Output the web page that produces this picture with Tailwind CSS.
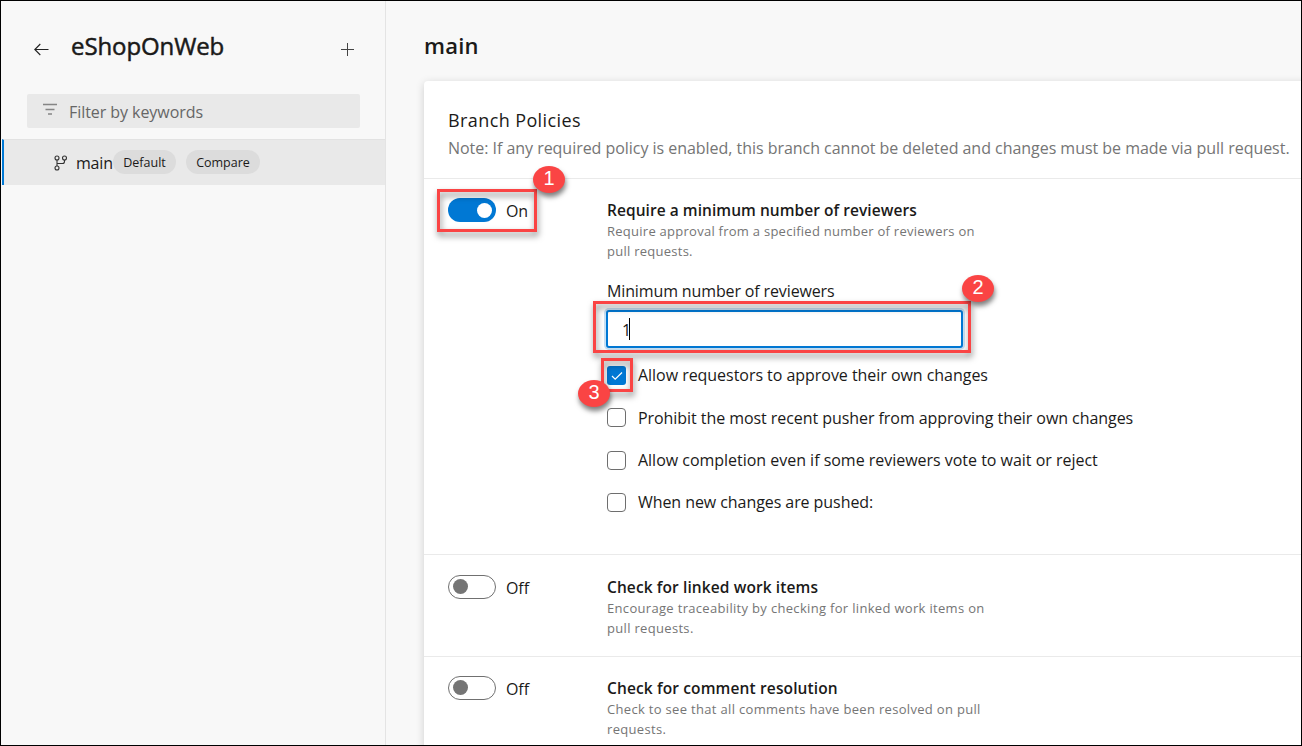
<!DOCTYPE html>
<html lang="en">
<head>
<meta charset="utf-8">
<title>Branch policies - main</title>
<script src="https://cdn.jsdelivr.net/npm/@tailwindcss/browser@4"></script>
</head>
<body class="font-['Open_Sans',sans-serif] text-[16px] text-[#1b1a19]">
<div class="relative flex h-[746px] w-[1302px] overflow-hidden border border-black bg-[#f8f8f8]">
  <aside class="flex w-[385px] shrink-0 flex-col border-r border-[#e4e4e4]">
    <header class="flex h-[93px] items-start pl-8 pr-[30px] pt-[28px]">
      <svg class="mt-[12px] h-4 w-4 shrink-0" viewBox="0 0 16 16" fill="none" stroke="#222" stroke-width="1.1"><path d="M15.500 8.500H1.800M7.300 3L1.800 8.500L7.300 14"/></svg>
      <h1 class="ml-[22px] whitespace-nowrap text-[24px] leading-[34px] tracking-[-0.1px] [-webkit-text-stroke:0.5px_#1b1a19]">eShopOnWeb</h1>
      <svg class="ml-auto mt-[13px] h-[15px] w-[15px] shrink-0" viewBox="0 0 15 15" fill="none" stroke="#444" stroke-width="1"><path d="M7.500 1V14M1 7.500H14"/></svg>
    </header>
    <div class="ml-[26px] flex h-[34px] w-[333px] shrink-0 items-center rounded-[2px] bg-[#e9e9e9] pl-[15px]">
      <svg class="mb-1 h-[14px] w-4" viewBox="0 0 16 14" fill="none" stroke="#858585" stroke-width="1.300"><path d="M1 2.500H15M3.500 7.500H12.500M6 12H10"/></svg>
      <span class="ml-[11px] mt-px whitespace-nowrap tracking-[-0.06px] text-[#666]">Filter by keywords</span>
    </div>
    <div class="ml-px mt-[11px] flex h-[46px] shrink-0 items-center border-l-2 border-t border-l-[#0078d4] border-t-[#e2e2e2] bg-[#e9e9e9] pl-[49px]">
      <svg class="h-4 w-4" viewBox="0 0 16 16" fill="none" stroke="#333" stroke-width="1.1"><circle cx="4" cy="3" r="2"/><circle cx="11.500" cy="3" r="2"/><circle cx="4" cy="13" r="2"/><path d="M4 5V11M11.500 5V6.500Q11.500 8.500 9.500 8.500H4"/></svg>
      <span class="ml-[7px] w-[37px] whitespace-nowrap tracking-[-0.2px]">main</span>
      <span class="mb-px flex h-6 w-[63px] items-center justify-center rounded-full bg-[#dcdcdc] pt-[3px] text-[12.5px]">Default</span>
      <span class="mb-px ml-[10px] flex h-6 w-[74px] items-center justify-center rounded-full bg-[#dcdcdc] pt-[3px] text-[12.5px]">Compare</span>
    </div>
  </aside>

  <main class="flex min-w-0 flex-1 flex-col pl-[38px]">
    <h2 class="h-[80px] shrink-0 pt-[27px] text-[22px] font-semibold leading-[34px] tracking-[0.2px]">main</h2>
    <section class="h-[700px] w-[900px] shrink-0 rounded-[4px] bg-white shadow-[0_2px_8px_rgba(0,0,0,0.17)]">
      <header class="h-[97px] pl-6 pt-[26px]">
        <h3 class="text-[18px] leading-[26px] tracking-[0.4px]">Branch Policies</h3>
        <p class="mt-[3px] whitespace-nowrap leading-6 tracking-[-0.035px] text-[#757575]">Note: If any required policy is enabled, this branch cannot be deleted and changes must be made via pull request.</p>
      </header>

      <div class="flex h-[376px] border-t border-[#eaeaea] pl-6">
        <div class="flex w-[159px] shrink-0 items-start pt-[19px]">
          <span class="flex h-6 w-12 items-center justify-end rounded-full bg-[#0078d4] pr-1"><span class="h-[15px] w-[15px] rounded-full bg-white"></span></span>
          <span class="ml-[10px] mt-px leading-6 tracking-[-0.3px]">On</span>
        </div>
        <div class="pt-5">
          <h4 class="whitespace-nowrap text-[15.5px] font-semibold leading-[22px] tracking-[0.05px]">Require a minimum number of reviewers</h4>
          <p class="whitespace-nowrap text-[13px] leading-5 tracking-[0.26px] text-[#757575]">Require approval from a specified number of reviewers on<br>pull requests.</p>
          <p class="mt-[18px] whitespace-nowrap leading-6 tracking-[-0.13px]">Minimum number of reviewers</p>
          <div class="-ml-px mt-[7px] flex h-[38px] w-[357px] items-center rounded-[3px] border-2 border-[#0078d4] bg-white pl-[14px] shadow-[0_0_0_2px_#c7e0f4]"><span class="mt-[2px]">1</span><span class="-ml-[2px] h-[22px] w-px bg-black"></span></div>
          <ul class="mt-[15px] flex flex-col">
            <li class="flex h-[42px] items-start"><span class="mt-[3px] flex h-[19px] w-[19px] items-center justify-center rounded-[3px] bg-[#0078d4]"><svg class="h-3 w-3" viewBox="0 0 12 12" fill="none" stroke="#fff" stroke-width="1.200"><path d="M1 6L4.200 9.200L11 2.500"/></svg></span><span class="ml-3 whitespace-nowrap leading-6 tracking-[-0.04px]">Allow requestors to approve their own changes</span></li>
            <li class="flex h-[43px] items-start"><span class="mt-[3px] h-[19px] w-[19px] rounded-[4px] border border-[#6e6e6e]"></span><span class="ml-3 mt-px whitespace-nowrap leading-6 tracking-[-0.06px]">Prohibit the most recent pusher from approving their own changes</span></li>
            <li class="flex h-[42px] items-start"><span class="mt-[3px] h-[19px] w-[19px] rounded-[4px] border border-[#6e6e6e]"></span><span class="ml-3 whitespace-nowrap leading-6 tracking-[-0.02px]">Allow completion even if some reviewers vote to wait or reject</span></li>
            <li class="flex h-[42px] items-start"><span class="mt-[3px] h-[19px] w-[19px] rounded-[4px] border border-[#6e6e6e]"></span><span class="ml-3 whitespace-nowrap leading-6 tracking-[-0.07px]">When new changes are pushed:</span></li>
          </ul>
        </div>
      </div>

      <div class="flex h-[102px] border-t border-[#eaeaea] pl-6">
        <div class="flex w-[159px] shrink-0 items-start pt-5">
          <span class="flex h-6 w-12 items-center rounded-full border border-[#707070] pb-px pl-1"><span class="h-[15px] w-[15px] rounded-full bg-[#757575]"></span></span>
          <span class="ml-[10px] mt-px leading-6 tracking-[-0.1px]">Off</span>
        </div>
        <div class="pt-[21px]">
          <h4 class="whitespace-nowrap text-[15.5px] font-semibold leading-[22px] tracking-[0.1px]">Check for linked work items</h4>
          <p class="whitespace-nowrap text-[13px] leading-5 tracking-[0.32px] text-[#757575]">Encourage traceability by checking for linked work items on<br>pull requests.</p>
        </div>
      </div>

      <div class="flex h-[102px] border-t border-[#eaeaea] pl-6">
        <div class="flex w-[159px] shrink-0 items-start pt-[19px]">
          <span class="flex h-6 w-12 items-center rounded-full border border-[#707070] pb-px pl-1"><span class="h-[15px] w-[15px] rounded-full bg-[#757575]"></span></span>
          <span class="ml-[10px] mt-px leading-6 tracking-[-0.1px]">Off</span>
        </div>
        <div class="pt-5">
          <h4 class="whitespace-nowrap text-[15.5px] font-semibold leading-[22px] tracking-[0.13px]">Check for comment resolution</h4>
          <p class="whitespace-nowrap text-[13px] leading-5 tracking-[0.32px] text-[#757575]">Check to see that all comments have been resolved on pull<br>requests.</p>
        </div>
      </div>
    </section>
  </main>

  <!-- Step highlights -->
  <div class="absolute left-[436px] top-[188px] h-[43px] w-[100px] border-3 border-[#fa4444] drop-shadow-[1px_4px_3px_rgba(0,0,0,0.5)]"></div>
  <div class="absolute left-[592px] top-[300px] h-[52px] w-[378px] border-3 border-[#fa4444] drop-shadow-[1px_4px_3px_rgba(0,0,0,0.5)]"></div>
  <div class="absolute left-[600px] top-[357px] h-[34px] w-[32px] border-3 border-[#fa4444] drop-shadow-[1px_4px_3px_rgba(0,0,0,0.5)]"></div>
  <div class="absolute left-[532px] top-[165px] flex h-[27px] w-[32px] items-center justify-center rounded-[50%] bg-[#fa4444] pb-[3px] font-['Liberation_Sans',sans-serif] text-[20px] leading-none text-white shadow-[1px_4px_5px_rgba(0,0,0,0.5)]">1</div>
  <div class="absolute left-[961px] top-[274px] flex h-[27px] w-[32px] items-center justify-center rounded-[50%] bg-[#fa4444] pb-[3px] font-['Liberation_Sans',sans-serif] text-[20px] leading-none text-white shadow-[1px_4px_5px_rgba(0,0,0,0.5)]">2</div>
  <div class="absolute left-[577px] top-[379px] flex h-[27px] w-[32px] items-center justify-center rounded-[50%] bg-[#fa4444] pb-[3px] font-['Liberation_Sans',sans-serif] text-[20px] leading-none text-white shadow-[1px_4px_5px_rgba(0,0,0,0.5)]">3</div>
</div>
</body>
</html>
